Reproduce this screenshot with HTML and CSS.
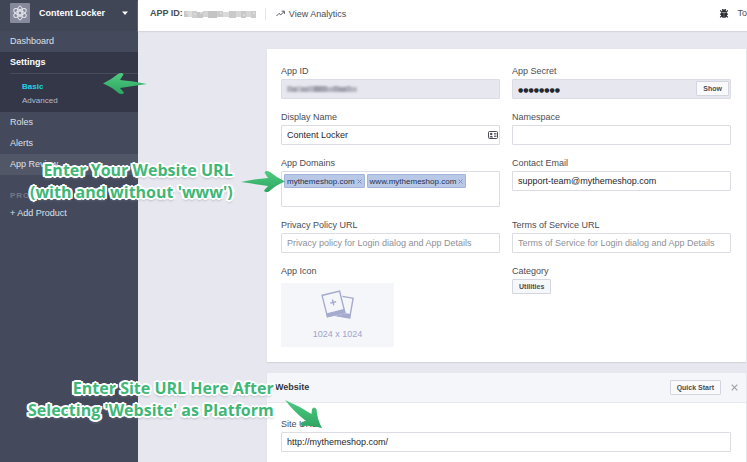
FILE: index.html
```html
<!DOCTYPE html>
<html lang="en">
<head>
<meta charset="utf-8">
<title>Content Locker - Basic Settings</title>
<link rel="stylesheet" href="styles.css">
</head>
<body>
<div class="page">
  <aside class="sidebar">
    <button class="app-switch" type="button">
      <svg class="app-logo" viewBox="0 0 20 20" aria-hidden="true">
        <rect width="20" height="20" rx="1" fill="#868a9c"/>
        <g fill="none" stroke="#e6e7ee" stroke-width="1">
          <ellipse cx="10" cy="10" rx="7" ry="2.8" transform="rotate(30 10 10)"/>
          <ellipse cx="10" cy="10" rx="7" ry="2.8" transform="rotate(90 10 10)"/>
          <ellipse cx="10" cy="10" rx="7" ry="2.8" transform="rotate(150 10 10)"/>
        </g>
        <circle cx="10" cy="10" r="2" fill="#868a9c" stroke="#f4f4f8"/>
      </svg>
      <span class="app-name">Content Locker</span>
      <svg class="caret" viewBox="0 0 6 4" aria-hidden="true"><path d="M0 0.5h6L3 4z" fill="#fff"/></svg>
    </button>
    <nav>
      <a class="nav-item" href="#">Dashboard</a>
      <div class="nav-group">
        <a class="nav-item nav-current" href="#">Settings</a>
        <div class="subnav">
          <a class="sub-item sub-active" href="#">Basic</a>
          <a class="sub-item" href="#">Advanced</a>
        </div>
      </div>
      <a class="nav-item" href="#">Roles</a>
      <a class="nav-item" href="#">Alerts</a>
      <a class="nav-item nav-hover" href="#">App Review</a>
      <h2 class="nav-heading">PRODUCTS</h2>
      <a class="nav-item" href="#">+ Add Product</a>
    </nav>
  </aside>

  <main class="main">
    <header class="topbar">
      <strong class="app-id">APP ID:</strong>
      <svg class="mosaic" viewBox="0 0 73 8" aria-hidden="true">
        <path d="M0 1h4v6H0z" fill="#c9c9c9"/><path d="M4 1h4v6H4z" fill="#dedede"/><path d="M8 1h5v7H8z" fill="#cfcfcf"/><path d="M13 2h6v6h-6z" fill="#c6c6c6"/><path d="M19 1h5v6h-5z" fill="#d3d3d3"/><path d="M24 1h9v7h-9z" fill="#c4c4c4"/><path d="M33 1h6v6h-6z" fill="#cccccc"/><path d="M39 2h6v5h-6z" fill="#dadada"/><path d="M45 1h7v7h-7z" fill="#cacaca"/><path d="M52 1h5v6h-5z" fill="#d6d6d6"/><path d="M57 1h5v7h-5z" fill="#c8c8c8"/><path d="M62 1h5v6h-5z" fill="#d5d5d5"/><path d="M67 1h5v7h-5z" fill="#cccccc"/>
        <path d="M2 2h2v2H2zM10 3h2v2h-2zM16 2h2v2h-2zM36 2h2v2h-2zM59 4h2v2h-2zM69 2h2v2h-2z" fill="#dadada"/>
      </svg>
      <a class="analytics" href="#">
        <svg class="trend" viewBox="0 0 9 7" aria-hidden="true"><path d="M0.5 6L3 3.4l1.8 1.5L8 1.6M5.6 1.2h2.8V4" fill="none" stroke="#5a5c63" stroke-width="1"/></svg>
        View Analytics
      </a>
      <svg class="bug" viewBox="0 0 10 9" aria-hidden="true">
        <path d="M3 2.2C3 0 7 0 7 2.2V3H3zM2 3.4h6v2.8C8 9.6 2 9.6 2 6.2z" fill="#2c2e35"/>
        <path d="M1.2 1.4l1.8 2M8.800 1.400l-1.800 2M1 5.200h8M1.200 8.300l1.800-1.800M8.800 8.300l-1.800-1.800M3.200 0l0.800 1M6.800 0L6 1" stroke="#2c2e35" stroke-width="1.200" fill="none"/>
        <path d="M5 4v4" stroke="#8c8e95" stroke-width="0.600"/>
      </svg>
      <a class="tools" href="#">To</a>
    </header>

    <div class="content">
      <section class="card form">
        <div class="field">
          <label for="app-id">App ID</label>
          <div class="control">
            <input id="app-id" class="locked" type="text" readonly>
            <svg class="mosaic field-mosaic" viewBox="0 0 73 8" aria-hidden="true">
              <path d="M0 1h5v6H0z" fill="#b4b4bf"/><path d="M5 2h5v5H5z" fill="#a6a6b2"/><path d="M10 1h4v6h-4z" fill="#c2c2cc"/><path d="M14 2h7v5h-7z" fill="#a9a9b5"/><path d="M21 1h6v6h-6z" fill="#b6b6c1"/><path d="M27 1h7v6h-7z" fill="#9c9ca9"/><path d="M34 1h6v6h-6z" fill="#a4a4b0"/><path d="M40 2h6v5h-6z" fill="#b5b5c0"/><path d="M46 1h6v6h-6z" fill="#aaaab6"/><path d="M52 2h7v5h-7z" fill="#a0a0ad"/><path d="M59 1h5v6h-5z" fill="#b0b0bc"/><path d="M64 2h6v5h-6z" fill="#b9b9c4"/>
            </svg>
          </div>
        </div>
        <div class="field">
          <label for="app-secret">App Secret</label>
          <div class="control">
            <input id="app-secret" class="locked secret" type="text" value="●●●●●●●●" readonly>
            <button class="btn show" type="button">Show</button>
          </div>
        </div>
        <div class="field">
          <label for="display-name">Display Name</label>
          <div class="control">
            <input id="display-name" type="text" value="Content Locker">
            <svg class="contact-card" viewBox="0 0 10 8" aria-hidden="true">
              <rect x="0.500" y="0.500" width="9" height="7" rx="1" fill="#fff" stroke="#4b4d54"/>
              <path d="M1.500 6.500c0-2 3.500-2 3.500 0z" fill="#4b4d54"/><circle cx="3.200" cy="3" r="1.200" fill="#4b4d54"/>
              <path d="M6 2.500h2.500M6 4h2.500M6 5.500h2.500" stroke="#4b4d54" stroke-width="0.800"/>
            </svg>
          </div>
        </div>
        <div class="field">
          <label for="namespace">Namespace</label>
          <input id="namespace" type="text">
        </div>
        <div class="field">
          <span class="label">App Domains</span>
          <div class="tokens">
            <span class="token">mythemeshop.com<button type="button" class="remove" aria-label="Remove"><svg viewBox="0 0 5 5"><path d="M0.500 0.500l4 4M4.500 0.500l-4 4" stroke="#7f90b8"/></svg></button></span>
            <span class="token">www.mythemeshop.com<button type="button" class="remove" aria-label="Remove"><svg viewBox="0 0 5 5"><path d="M0.500 0.500l4 4M4.500 0.500l-4 4" stroke="#7f90b8"/></svg></button></span>
          </div>
        </div>
        <div class="field">
          <label for="email">Contact Email</label>
          <input id="email" type="text" value="support-team@mythemeshop.com">
        </div>
        <div class="field">
          <label for="privacy">Privacy Policy URL</label>
          <input id="privacy" type="text" placeholder="Privacy policy for Login dialog and App Details">
        </div>
        <div class="field">
          <label for="terms">Terms of Service URL</label>
          <input id="terms" type="text" placeholder="Terms of Service for Login dialog and App Details">
        </div>
        <div class="field">
          <span class="label">App Icon</span>
          <button class="icon-drop" type="button">
            <svg class="photos" viewBox="0 0 34 30" aria-hidden="true">
              <g transform="rotate(10 24 17)"><rect x="14.500" y="7" width="16" height="20" fill="#f5f6f9" stroke="#a5aacf" stroke-width="1.400"/><path d="M14 23h17v4.500H14z" fill="#a5aacf"/></g>
              <g transform="rotate(-14 12 14)"><rect x="2" y="2" width="21" height="24" fill="#f5f6f9"/><rect x="3.500" y="3" width="18" height="22" fill="#f5f6f9" stroke="#a5aacf" stroke-width="1.400"/><path d="M3 21.500h19V25.700H3z" fill="#a5aacf"/><path d="M12.500 9.500v6M9.500 12.500h6" stroke="#a5aacf" stroke-width="1.400"/></g>
            </svg>
            <span>1024 x 1024</span>
          </button>
        </div>
        <div class="field">
          <span class="label">Category</span>
          <button class="btn category" type="button">Utilities</button>
        </div>
      </section>

      <section class="card platform">
        <header class="platform-head">
          <h2>Website</h2>
          <button class="btn" type="button">Quick Start</button>
          <button class="close" type="button" aria-label="Close"><svg viewBox="0 0 7 7"><path d="M0.700 0.700l5.600 5.600M6.300 0.700L0.700 6.300" stroke="#a0a2a8" stroke-width="1.200"/></svg></button>
        </header>
        <div class="platform-body">
          <div class="field">
            <label for="site-url">Site URL</label>
            <input id="site-url" type="text" value="http://mythemeshop.com/">
          </div>
        </div>
      </section>
    </div>
  </main>

  <p class="note note-domains">Enter Your Website URL<br>(with and without 'www')</p>
  <p class="note note-site">Enter Site URL Here After<br>Selecting 'Website' as Platform</p>
  <svg class="arrow arrow-basic" viewBox="0 0 46 24" aria-hidden="true">
    <defs><linearGradient id="green" x1="0" y1="0" x2="0" y2="1"><stop offset="0" stop-color="#4fcb80"/><stop offset="1" stop-color="#2da562"/></linearGradient></defs>
    <path d="M1 11.500Q10 7 16 2Q20 0 21.500 2.500L18 8Q31 9 45 12Q31 14 18 16L22 20.500Q21 23 17 21.500Q10 15 1 11.500z" fill="url(#green)"/>
  </svg>
  <svg class="arrow arrow-domains" viewBox="0 0 46 24" aria-hidden="true">
    <path d="M45 11.500Q36 7 30 2Q26 0 24.500 2.500L28 8Q15 9 1 12Q15 14 28 16L24 20.500Q25 23 29 21.500Q36 15 45 11.500z" fill="url(#green)"/>
  </svg>
  <svg class="arrow arrow-site" viewBox="0 0 40 32" aria-hidden="true">
    <path d="M1 1Q15 7 27.500 15L28 10Q30 7 32.500 10Q33 20 38 29Q27 26 18 27Q15 25 18 23L22 22Q10 13 1 1z" fill="url(#green)"/>
  </svg>
</div>
</body>
</html>
```

FILE: styles.css
```css
* {
  box-sizing: border-box;
}

body {
  margin: 0;
  font-family: "Liberation Sans", Arial, sans-serif;
  font-size: 9px;
  line-height: 15px;
  color: #4b4d54;
  background: #e7e8ef;
}

a {
  color: inherit;
  text-decoration: none;
}

button,
input {
  font: inherit;
  color: inherit;
}

button {
  padding: 0;
  border: 0;
  background: none;
}

svg {
  display: block;
  flex: none;
}

h2,
p {
  margin: 0;
}

.page {
  position: relative;
  display: flex;
  min-height: 100vh;
  overflow: hidden;
}

/* Sidebar */

.sidebar {
  flex: none;
  width: 138px;
  color: #dfe0e7;
  background: #444a5c;
}

.app-switch {
  display: flex;
  align-items: center;
  width: 100%;
  height: 31px;
  padding: 0 10px 5px;
  text-align: left;
  color: #fff;
  font-weight: bold;
  background: #414657;
}

.app-logo {
  width: 20px;
  height: 20px;
  margin-right: 9px;
}

.app-name {
  flex: 1;
}

.caret {
  width: 6px;
  height: 4px;
}

.nav-item {
  display: block;
  padding: 0 10px;
  line-height: 21px;
}

.nav-group {
  padding-bottom: 4px;
  background: #343747;
}

.nav-current {
  color: #fff;
  font-weight: bold;
}

.subnav {
  margin-left: 10px;
  padding: 6px 0 0 12px;
  border-top: 1px solid #484b5a;
}

.sub-item {
  display: block;
  font-size: 8px;
  line-height: 14px;
  color: #b9bbc8;
}

.sub-active {
  font-weight: bold;
  color: #1fd3e6;
}

.nav-hover {
  background: #525768;
}

.nav-heading {
  margin-top: 13px;
  padding-left: 10px;
  font-size: 8px;
  line-height: 15px;
  letter-spacing: 1px;
  color: #747989;
}

/* Top bar */

.main {
  flex: 1;
  min-width: 0;
  display: flex;
  flex-direction: column;
}

.topbar {
  display: flex;
  align-items: center;
  height: 31px;
  padding: 0 0 4px 12px;
  background: #fff;
  box-shadow: 0 1px 1px #d5d6de;
}

.mosaic {
  width: 73px;
  height: 8px;
}

.topbar .mosaic {
  margin-left: 1px;
}

.analytics {
  display: flex;
  align-items: center;
  gap: 4px;
  margin-left: 8px;
  padding-left: 10px;
  line-height: 12px;
  border-left: 1px solid #e4e5ea;
}

.trend {
  width: 9px;
  height: 7px;
}

.bug {
  width: 10px;
  height: 9px;
  margin-left: auto;
}

.tools {
  margin-left: 8px;
}

/* Cards */

.content {
  flex: 1;
  display: flex;
  flex-direction: column;
  gap: 11px;
  padding: 18px 1px 0 129px;
}

.card {
  background: #fff;
  box-shadow: 0 1px 1px #d2d4dc;
}

.form {
  display: grid;
  grid-template-columns: 1fr 1fr;
  gap: 11px 12px;
  padding: 15px 15px 15px 14px;
}

.field label,
.label {
  display: block;
}

.control {
  position: relative;
}

.field input {
  display: block;
  width: 100%;
  height: 20px;
  padding: 0 5px;
  border: 1px solid #dcdde4;
  border-radius: 1px;
  background: #fff;
  color: #25272e;
}

.field input::placeholder {
  color: #8d8f98;
  opacity: 1;
}

.field .locked {
  background: #e7e8ef;
}

.field .secret {
  font-family: "DejaVu Sans", sans-serif;
  font-size: 6px;
}

.field-mosaic {
  position: absolute;
  top: 6px;
  left: 6px;
  filter: blur(1px);
}

.btn {
  height: 15px;
  padding: 0 6px;
  border: 1px solid #d3d5df;
  border-radius: 1px;
  background: #fafafc;
  font-size: 7px;
  line-height: 13px;
  font-weight: bold;
  color: #4b4d54;
}

.show {
  position: absolute;
  top: 2px;
  right: 2px;
}

.contact-card {
  position: absolute;
  top: 6px;
  right: 2px;
  width: 10px;
  height: 8px;
}

.tokens {
  display: flex;
  align-items: flex-start;
  gap: 2px;
  height: 36px;
  padding: 2px;
  border: 1px solid #dcdde4;
  border-radius: 1px;
}

.token {
  display: flex;
  align-items: center;
  gap: 2px;
  height: 14px;
  padding: 0 2px;
  border: 1px solid #a3b4dc;
  border-radius: 1px;
  background: #bac8e8;
  font-size: 8px;
  color: #25304b;
}

.remove svg {
  width: 5px;
  height: 5px;
}

.icon-drop {
  display: flex;
  flex-direction: column;
  align-items: center;
  gap: 7px;
  width: 113px;
  height: 64px;
  margin-top: 4px;
  padding-top: 7px;
  background: #f5f6f9;
  color: #a0a5c8;
}

.photos {
  width: 34px;
  height: 30px;
}

.category {
  background: #f6f7fb;
}

.platform {
  flex: 1;
}

.platform-head {
  display: flex;
  align-items: center;
  gap: 10px;
  height: 30px;
  padding: 0 8px;
  border-bottom: 1px solid #e7e8ed;
  background: #f5f6f9;
}

.platform-head h2 {
  flex: 1;
  font-size: 9px;
  color: #33353c;
}

.close svg {
  width: 7px;
  height: 7px;
}

.platform-body {
  padding: 14px 15px 10px 14px;
}

/* Tutorial notes over the page */

.arrow {
  position: absolute;
}

.arrow-basic {
  top: 72px;
  left: 102px;
  width: 46px;
  height: 24px;
}

.arrow-domains {
  top: 170px;
  left: 240px;
  width: 46px;
  height: 24px;
}

.arrow-site {
  top: 399px;
  left: 284px;
  width: 40px;
  height: 32px;
}

.note {
  position: absolute;
  font-family: "Open Sans", "Noto Sans", sans-serif;
  font-size: 16px;
  line-height: 22px;
  font-weight: bold;
  text-align: right;
  white-space: nowrap;
  color: #3fb777;
  text-shadow:
    2px 0 #fff, -2px 0 #fff, 0 2px #fff, 0 -2px #fff,
    1px 1px #fff, -1px 1px #fff, 1px -1px #fff, -1px -1px #fff,
    2px 1px #fff, -2px 1px #fff, 2px -1px #fff, -2px -1px #fff,
    0 2px 3px #8c8e98;
}

.note-domains {
  top: 159px;
  left: 30px;
}

.note-site {
  top: 377px;
  left: 28px;
}
```
